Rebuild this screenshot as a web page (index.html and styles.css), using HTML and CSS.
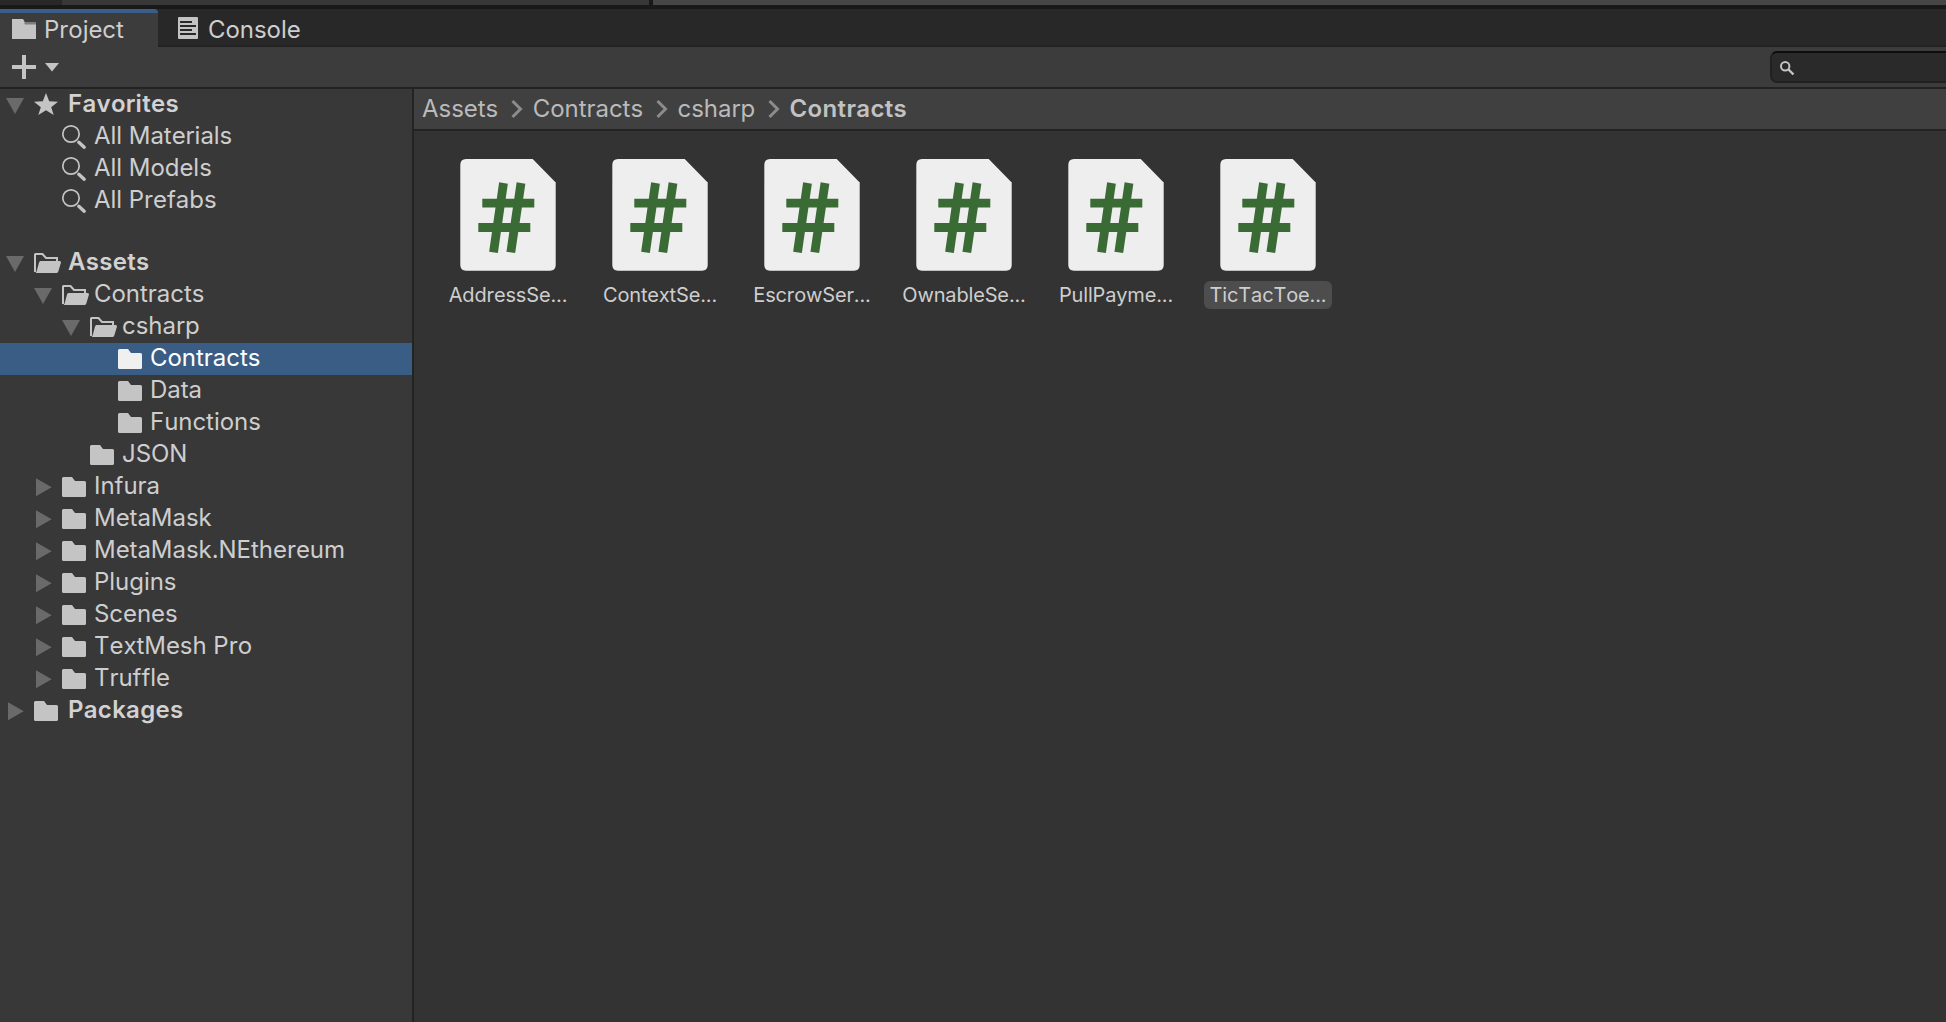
FILE: index.html
```html
<!DOCTYPE html>
<html lang="en">
<head>
<meta charset="utf-8">
<title>Project</title>
<link rel="stylesheet" href="styles.css">
</head>
<body>
<svg class="sprites" width="0" height="0">
  <defs>
    <symbol id="folder" viewBox="0 0 28 32"><path d="M2 7.500Q2 6 3.500 6H12L15 10H24.500Q26 10 26 11.500V24.500Q26 26 24.500 26H3.500Q2 26 2 24.500Z"/></symbol>
    <symbol id="folder-open" viewBox="0 0 30 32"><path d="M3 25V7.500Q3 7 3.500 7H10.500L14 11H25V14" fill="none" stroke="currentColor" stroke-width="2"/><path d="M8.500 14H27.500Q29.300 14 29 15.500L26.300 24.500Q25.800 26 24.300 26H3.500Q4.500 25.500 5 23L7 15.500Q7.400 14 8.500 14Z"/></symbol>
    <symbol id="down" viewBox="0 0 18 32"><path d="M0 9H18L9 25Z"/></symbol>
    <symbol id="right" viewBox="0 0 18 32"><path d="M2 7.300V25.300L17.700 16.300Z"/></symbol>
    <symbol id="star" viewBox="0 0 28 32"><path d="M14 4L17.200 12.200L26 12.700L19.200 18.200L21.700 26L14 21.300L6.300 26L8.800 18.200L2 12.700L10.800 12.200Z"/></symbol>
    <symbol id="lens" viewBox="0 0 28 32"><circle cx="11" cy="13" r="8.200" fill="none" stroke="currentColor" stroke-width="1.700"/><path d="M18.800 21.300L24.200 26.200" stroke="currentColor" stroke-width="3.400" stroke-linecap="round"/></symbol>
    <symbol id="script" viewBox="0 0 128 128"><path class="page" d="M22 8H88.700L111.700 31.500V114Q111.700 119.700 106 119.700H22Q16.300 119.700 16.300 114V14Q16.300 8 22 8Z"/><path class="mark" d="M59.500 32L49.500 101.300M77 32L66.800 101.300M38.300 52.200H90.300M34.300 76.500H86.300"/></symbol>
    <symbol id="chevron" viewBox="0 0 12 20"><path d="M1.500 2L9.500 10L1.500 18" fill="none" stroke="currentColor" stroke-width="3"/></symbol>
  </defs>
</svg>
<div class="strip"><span class="strip-dark"></span><span class="strip-mid"></span><span class="strip-gap"></span><span class="strip-light"></span></div>
<div class="tabs">
  <div class="tab active"><svg class="tab-icon" width="24" height="20"><path d="M0 0H11L13 3.500H24V20H0Z" fill="#c4c4c4"/><path d="M12 3.500H24V5.500H13Z" fill="#7d7d7d"/></svg><span>Project</span></div>
  <div class="tab"><svg class="tab-icon" width="20" height="22"><rect width="20" height="22" rx="1" fill="#c4c4c4"/><path d="M2 5H14M2 9H18M2 13H14M2 17H18" stroke="#282828" stroke-width="2"/></svg><span>Console</span></div>
</div>
<div class="toolbar">
  <svg class="add" width="48" height="24"><path d="M0 12H24M12 0V24" stroke="#c4c4c4" stroke-width="4"/><path d="M33 8H47L40 16.500Z" fill="#c4c4c4"/></svg>
  <div class="search"><svg width="16" height="16"><circle cx="5.200" cy="5.200" r="4.200" fill="none" stroke="#c4c4c4" stroke-width="2"/><path d="M8 8L13.500 13.500" stroke="#c4c4c4" stroke-width="2.400"/></svg></div>
</div>
<div class="main">
  <div class="tree">
    <div class="row root"><svg class="arrow"><use href="#down"/></svg><svg class="icon"><use href="#star"/></svg><span>Favorites</span></div>
    <div class="row d1"><svg class="icon"><use href="#lens"/></svg><span>All Materials</span></div>
    <div class="row d1"><svg class="icon"><use href="#lens"/></svg><span>All Models</span></div>
    <div class="row d1 last"><svg class="icon"><use href="#lens"/></svg><span>All Prefabs</span></div>
    <div class="row root"><svg class="arrow"><use href="#down"/></svg><svg class="icon open"><use href="#folder-open"/></svg><span>Assets</span></div>
    <div class="row d1"><svg class="arrow"><use href="#down"/></svg><svg class="icon open"><use href="#folder-open"/></svg><span>Contracts</span></div>
    <div class="row d2"><svg class="arrow"><use href="#down"/></svg><svg class="icon open"><use href="#folder-open"/></svg><span>csharp</span></div>
    <div class="row d3 selected"><svg class="icon"><use href="#folder"/></svg><span>Contracts</span></div>
    <div class="row d3"><svg class="icon"><use href="#folder"/></svg><span>Data</span></div>
    <div class="row d3"><svg class="icon"><use href="#folder"/></svg><span>Functions</span></div>
    <div class="row d2"><svg class="icon"><use href="#folder"/></svg><span>JSON</span></div>
    <div class="row d1"><svg class="arrow"><use href="#right"/></svg><svg class="icon"><use href="#folder"/></svg><span>Infura</span></div>
    <div class="row d1"><svg class="arrow"><use href="#right"/></svg><svg class="icon"><use href="#folder"/></svg><span>MetaMask</span></div>
    <div class="row d1"><svg class="arrow"><use href="#right"/></svg><svg class="icon"><use href="#folder"/></svg><span>MetaMask.NEthereum</span></div>
    <div class="row d1"><svg class="arrow"><use href="#right"/></svg><svg class="icon"><use href="#folder"/></svg><span>Plugins</span></div>
    <div class="row d1"><svg class="arrow"><use href="#right"/></svg><svg class="icon"><use href="#folder"/></svg><span>Scenes</span></div>
    <div class="row d1"><svg class="arrow"><use href="#right"/></svg><svg class="icon"><use href="#folder"/></svg><span>TextMesh Pro</span></div>
    <div class="row d1"><svg class="arrow"><use href="#right"/></svg><svg class="icon"><use href="#folder"/></svg><span>Truffle</span></div>
    <div class="row root"><svg class="arrow"><use href="#right"/></svg><svg class="icon"><use href="#folder"/></svg><span>Packages</span></div>
  </div>
  <div class="content">
    <div class="crumbs"><span>Assets</span><svg><use href="#chevron"/></svg><span>Contracts</span><svg><use href="#chevron"/></svg><span>csharp</span><svg><use href="#chevron"/></svg><b>Contracts</b></div>
    <div class="grid">
      <div class="file"><svg><use href="#script"/></svg><span>AddressSe...</span></div>
      <div class="file"><svg><use href="#script"/></svg><span>ContextSe...</span></div>
      <div class="file"><svg><use href="#script"/></svg><span>EscrowSer...</span></div>
      <div class="file"><svg><use href="#script"/></svg><span>OwnableSe...</span></div>
      <div class="file"><svg><use href="#script"/></svg><span>PullPayme...</span></div>
      <div class="file picked"><svg><use href="#script"/></svg><span>TicTacToe...</span></div>
    </div>
  </div>
</div>
</body>
</html>
```
FILE: styles.css
```css
* { box-sizing: border-box; }
body { margin: 0; height: 1022px; overflow: hidden; display: flex; flex-direction: column; background: #333; color: #cecece; font-family: Inter, "Liberation Sans", sans-serif; font-size: 24px; font-weight: 400; font-kerning: none; letter-spacing: -.04px; }
svg { display: block; flex: none; }
.sprites { display: none; }
.strip { display: flex; flex: none; height: 9px; border-bottom: 4px solid #191919; }
.strip-dark { width: 62px; background: #282828; }
.strip-mid { width: 587px; background: #383838; }
.strip-gap { width: 4px; background: #191919; }
.strip-light { flex: 1; background: #464646; }
.tabs { display: flex; flex: none; height: 38px; background: #282828; box-shadow: inset 0 -2px #232323; line-height: 34px; }
.tab { display: flex; align-items: flex-start; padding: 4px 0 0 20px; gap: 10px; }
.tab.active { width: 158px; padding: 0 0 0 12px; gap: 8px; background: #3c3c3c; border-top: 4px solid #3a5e8a; border-top-right-radius: 4px; }
.tab-icon { margin-top: 6px; }
.tab:not(.active) .tab-icon { margin-top: 4px; }
.toolbar { display: flex; flex: none; height: 42px; background: #3c3c3c; border-bottom: 2px solid #232323; justify-content: space-between; padding-left: 12px; }
.add { margin-top: 8px; }
.search { width: 176px; height: 32px; margin-top: 4px; padding: 8px 0 0 8px; background: #2a2a2a; border: 2px solid #212121; border-top-color: #0d0d0d; border-right: 0; border-radius: 7px 0 0 7px; }
.main { display: flex; flex: 1; min-height: 0; }
.tree { width: 414px; flex: none; background: #383838; border-right: 2px solid #232323; }
.row { display: flex; height: 32px; line-height: 29px; padding-left: 6px; white-space: nowrap; }
.d1 { padding-left: 34px; }
.d2 { padding-left: 62px; }
.d3 { padding-left: 90px; }
.last { margin-bottom: 30px; }
.root { font-weight: 600; letter-spacing: .3px; color: #d2d2d2; }
.arrow { width: 18px; height: 32px; margin-right: 8px; fill: #6a6a6a; }
.icon { width: 28px; height: 32px; margin-right: 6px; fill: #c4c4c4; color: #c4c4c4; }
.icon:first-child { margin-left: 26px; }
.icon.open { width: 30px; margin-right: 4px; }
.root span { margin-left: 2px; }
.selected { background: #3a5d85; color: #fff; }
.selected .icon { fill: #f0f0f0; }
.content { flex: 1; }
.crumbs { display: flex; height: 42px; line-height: 40px; background: #404040; border-bottom: 2px solid #232323; padding-left: 8px; color: #bababa; }
.crumbs svg { width: 12px; height: 20px; margin: 10px 9.5px 0 13px; color: #8c8c8c; }
.crumbs b { font-weight: 600; letter-spacing: .35px; color: #c2c2c2; }
.grid { display: flex; gap: 24px; padding: 20px 0 0 30px; }
.file { width: 128px; font-size: 20px; letter-spacing: -.15px; }
.file svg { width: 128px; height: 128px; }
.file span { display: block; height: 28px; line-height: 28px; margin-top: 2px; border-radius: 6px; text-align: center; }
.page { fill: #eee; }
.mark { fill: none; stroke: #3a6b35; stroke-width: 8.800; }
.picked .page { fill: #cdd8ec; }
.picked .mark { stroke: #32602f; }
.picked span { background: #4d4d4d; }
```
